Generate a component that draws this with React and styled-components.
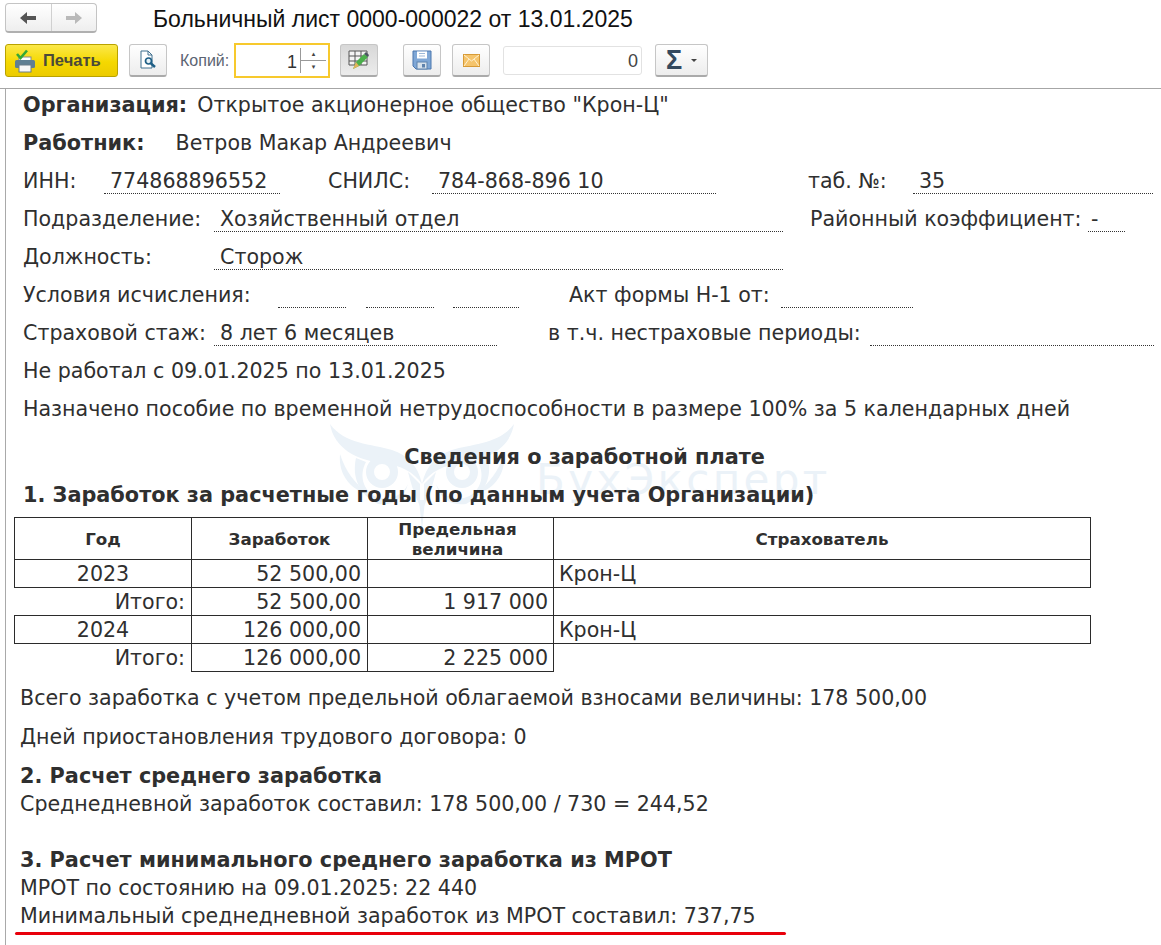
import React from "react";
import styled, { createGlobalStyle } from "styled-components";

const Global = createGlobalStyle`
  html, body { margin: 0; padding: 0; background: #fff; }
  body { width: 1161px; height: 945px; overflow: hidden; font-family: "DejaVu Sans", sans-serif; }
`;

const Page = styled.div`
  width: 1161px;
  height: 945px;
  overflow: hidden;
  display: flex;
  flex-direction: column;
`;

const TitleBar = styled.div`
  height: 41px;
  display: flex;
  align-items: flex-start;
  padding: 3px 0 0 5px;
  box-sizing: border-box;
`;

const NavGroup = styled.div`
  width: 92px;
  height: 30px;
  display: flex;
  box-sizing: border-box;
  border: 1px solid #c4c4c4;
  border-bottom: 2px solid #b0b0b0;
  border-radius: 4px;
  background: linear-gradient(#fff, #eeeeee);
`;

const NavBtn = styled.div`
  flex: 1;
  display: flex;
  align-items: center;
  justify-content: center;
  & + & { border-left: 1px solid #d0d0d0; }
`;

const DocTitle = styled.div`
  margin: 3px 0 0 56px;
  font: 23px "Liberation Sans", sans-serif;
  color: #111;
`;

const Toolbar = styled.div`
  height: 48px;
  display: flex;
  align-items: flex-start;
  padding: 3px 0 0 5px;
  box-sizing: border-box;
  border-bottom: 1px solid #a6a6a6;
`;

const PrintBtn = styled.div`
  width: 113px;
  height: 33px;
  box-sizing: border-box;
  display: flex;
  align-items: center;
  gap: 7px;
  padding-left: 8px;
  border: 1px solid #b9a200;
  border-radius: 3px;
  background: linear-gradient(#fbe84a, #f5d800 55%, #eccb00);
  font: bold 16.5px "Liberation Sans", sans-serif;
  color: #4a4a3a;
`;

const IconBtn = styled.div`
  width: ${({ w }) => w || 38}px;
  height: 33px;
  margin-left: ${({ ml }) => ml || 0}px;
  box-sizing: border-box;
  display: flex;
  align-items: center;
  justify-content: center;
  gap: 9px;
  border: 1px solid #c6c6c6;
  border-bottom: 2px solid #aaa;
  border-radius: 3px;
  background: ${({ active }) => (active ? "linear-gradient(#d8d8d8, #ececec)" : "linear-gradient(#fff, #ededed)")};
`;

const CopiesLabel = styled.div`
  margin: 8px 3px 0 13px;
  width: 51px;
  font: 16px "Liberation Sans", sans-serif;
  color: #5b6472;
`;

const CopiesInput = styled.div`
  width: 96px;
  height: 35px;
  margin-top: -1px;
  box-sizing: border-box;
  display: flex;
  justify-content: flex-end;
  border: 2px solid #f7c92d;
  background: #fff;
  padding: 3px 2px 3px 4px;
`;

const CopiesValue = styled.div`
  font: 18px "Liberation Sans", sans-serif;
  color: #333;
  padding: 4px 3px 0 0;
`;

const Spinner = styled.div`
  width: 25px;
  border-left: 1px solid #999;
  display: flex;
  flex-direction: column;
  font-size: 7px;
  line-height: 12px;
  text-align: center;
  color: #444;
`;

const SpinUp = styled.div`
  flex: 1;
  border-bottom: 1px solid #999;
`;

const SpinDown = styled.div`
  flex: 1;
`;

const SumInput = styled.div`
  width: 139px;
  height: 29px;
  margin: 2px 0 0 13px;
  box-sizing: border-box;
  border: 1px solid #e2e2e2;
  border-radius: 3px;
  text-align: right;
  padding: 4px 3px 0 0;
  font: 18px "Liberation Sans", sans-serif;
  color: #444;
`;

const SigmaGlyph = styled.span`
  font: bold 27px "Liberation Sans", sans-serif;
  color: #34495e;
`;

const Caret = styled.span`
  width: 0;
  height: 0;
  border-left: 3px solid transparent;
  border-right: 3px solid transparent;
  border-top: 3px solid #444;
`;

const Report = styled.div`
  position: relative;
  flex: 1;
  margin-left: 5px;
  padding: 1px 0 0 17px;
  border-left: 1px solid #a9a9a9;
  color: #2f2f2f;
  font-size: 20.6px;
`;

const Watermark = styled.div`
  position: absolute;
  left: 316px;
  top: 333px;
  display: flex;
  align-items: flex-start;
  color: #ebf2f8;
  pointer-events: none;
`;

const WatermarkText = styled.div`
  font: 42px "DejaVu Sans", sans-serif;
  margin: 33px 0 0 14px;
  letter-spacing: 3.4px;
  white-space: nowrap;
`;

const Line = styled.div`
  position: relative;
  height: ${({ h }) => h || 38}px;
  line-height: 30px;
  white-space: nowrap;
  display: flex;
  align-items: flex-start;
  padding-top: ${({ pt }) => pt || 0}px;
  box-sizing: border-box;
`;

const Strong = styled.b`
  font-weight: 700;
  font-size: 20.8px;
  margin-right: ${({ mr }) => mr || 0}px;
`;

const Label = styled.span`
  width: ${({ w }) => (w ? `${w}px` : "auto")};
  margin-left: ${({ ml }) => ml || 0}px;
  flex: none;
`;

const Field = styled.span`
  flex: none;
  box-sizing: border-box;
  width: ${({ w }) => w}px;
  margin-left: ${({ ml }) => ml || 0}px;
  height: 28px;
  padding-left: ${({ pl }) => (pl === undefined ? 6 : pl)}px;
  border-bottom: 1px dotted #333;
`;

const Section = styled.div`
  font-weight: 700;
  font-size: 20.8px;
  height: ${({ h }) => h || 38}px;
  line-height: 30px;
  text-align: ${({ center }) => (center ? "center" : "left")};
  width: ${({ center }) => (center ? "1123px" : "auto")};
  position: relative;
`;

const Table = styled.table`
  position: relative;
  border-collapse: collapse;
  table-layout: fixed;
  width: 1077px;
  margin: 0 0 0 -9px;
  font-size: 20.6px;
`;

const HeadCell = styled.th`
  height: 41px;
  padding: 0 ${({ pr }) => pr || 0}px 0 0;
  border: 1px solid #2b2b2b;
  font-size: 16.7px;
  line-height: 20px;
  font-weight: 700;
  text-align: center;
  color: #2f2f2f;
`;

const Cell = styled.td`
  height: 27px;
  padding: 0 ${({ pr }) => pr || 5}px 0 5px;
  line-height: 24px;
  border: 1px solid #2b2b2b;
  text-align: ${({ align }) => align || "left"};
  white-space: nowrap;
`;

const Total = styled.td`
  padding: 0 6px 0 0;
  text-align: right;
  line-height: 24px;
  border-left: 0;
  border-right: 1px solid #2b2b2b;
`;

const EmptyEnd = styled.td`
  border: 0;
  border-left: 1px solid #2b2b2b;
`;

const Tight = styled.div`
  height: ${({ h }) => h || 28}px;
  line-height: 28px;
  white-space: nowrap;
  font-weight: ${({ bold }) => (bold ? 700 : 400)};
  font-size: ${({ bold }) => (bold ? 20.8 : 20.6)}px;
`;

const Below = styled.div`
  margin-left: -3px;
  position: relative;
`;

const RedLine = styled.div`
  width: 771px;
  height: 3px;
  margin: 2px 0 0 -5px;
  background: #e8000b;
  border-radius: 2px;
`;

const ArrowIcon = ({ dir, color }) => (
  <svg width="18" height="14" viewBox="0 0 18 14">
    <path
      d={dir === "left" ? "M1 7 L8 1 V5 H17 V9 H8 V13 Z" : "M17 7 L10 1 V5 H1 V9 H10 V13 Z"}
      fill={color}
    />
  </svg>
);

const PrinterIcon = () => (
  <svg width="22" height="24" viewBox="0 0 22 24">
    <rect x="5" y="8" width="12" height="6" fill="#fff" stroke="#888" />
    <rect x="1" y="11" width="20" height="8" rx="1.5" fill="#5f7f92" />
    <rect x="5" y="16" width="12" height="7" fill="#f7f7f7" stroke="#6a7c88" />
    <path d="M3 5 L6.5 9 L13 1.5" fill="none" stroke="#35a835" strokeWidth="2.6" />
  </svg>
);

const PreviewIcon = () => (
  <svg width="18" height="20" viewBox="0 0 18 20">
    <path d="M2 1 H9 L13 5 V18 H2 Z" fill="#fff" stroke="#41708f" />
    <path d="M9 1 V5 H13" fill="none" stroke="#41708f" />
    <circle cx="9.5" cy="11" r="3" fill="#e6f2f8" stroke="#1f5f86" strokeWidth="1.7" />
    <path d="M12 13.5 L16 17" stroke="#1f5f86" strokeWidth="2.4" />
  </svg>
);

const TableEditIcon = () => (
  <svg width="22" height="22" viewBox="0 0 22 22">
    <path d="M1 2 H19 V16 H1 Z M1 7 H19 M1 12 H19 M7 2 V16 M13 2 V16" fill="#f4f4f4" stroke="#555" />
    <path d="M5 20 L8 13 L16 5 L20 8 L11 17 Z" fill="#4bb04b" />
    <path d="M16 5 L18 3 L21 6 L20 8 Z" fill="#4a5560" />
    <path d="M5 20 L8 13 L11 17 Z" fill="#e3b35c" />
  </svg>
);

const SaveIcon = () => (
  <svg width="20" height="20" viewBox="0 0 20 20">
    <path d="M1 1 H19 V19 H4 L1 16 Z" fill="#7fa7d6" stroke="#4a76ae" />
    <rect x="5" y="1.5" width="10" height="7" fill="#fff" />
    <path d="M7 3.5 H13 M7 6 H13" stroke="#9db8d8" />
    <rect x="5" y="12" width="10" height="7" fill="#d8e2ec" stroke="#5f83ad" />
    <rect x="10" y="14" width="3" height="3.5" fill="#5f83ad" />
  </svg>
);

const MailIcon = () => (
  <svg width="17" height="13" viewBox="0 0 17 13">
    <rect x="0.5" y="0.5" width="16" height="12" fill="#f5c46c" stroke="#d79a35" />
    <path d="M1 1 L8.5 7 L16 1 M1 12 L6 5 M16 12 L11 5" fill="none" stroke="#fff1cf" />
  </svg>
);

// половина совы, вторая половина зеркалится вокруг x=100
const OwlHalf = () => (
  <g>
    <path d="M8 2 C22 22 50 22 70 28 C86 33 96 44 100 62 C92 50 78 43 60 41 C34 38 12 26 8 2 Z" />
    <path d="M18 32 C24 50 32 60 46 72 C30 68 16 54 18 32 Z" />
    <path d="M34 36 C30 54 36 72 56 82 C72 84 82 76 86 62 C82 72 70 78 58 76 C42 72 36 54 44 40 Z" />
    <path d="M86 50 C90 66 94 76 98 84 L98 62 Z" />
    <circle cx="60" cy="50" r="12" fill="none" stroke="#ebf2f8" strokeWidth="8" />
  </g>
);

const OwlMark = () => (
  <svg width="200" height="110" viewBox="0 0 200 110" fill="#ebf2f8">
    <OwlHalf />
    <g transform="translate(200 0) scale(-1 1)">
      <OwlHalf />
    </g>
    <path d="M97 78 L100 108 L103 78 Z" />
  </svg>
);

const years = [
  { year: "2023", earned: "52 500,00", limit: "1 917 000" },
  { year: "2024", earned: "126 000,00", limit: "2 225 000" },
];

const App = () => (
  <Page>
    <Global />
    <TitleBar>
      <NavGroup>
        <NavBtn><ArrowIcon dir="left" color="#555" /></NavBtn>
        <NavBtn><ArrowIcon dir="right" color="#b9b9b9" /></NavBtn>
      </NavGroup>
      <DocTitle>Больничный лист 0000-000022 от 13.01.2025</DocTitle>
    </TitleBar>
    <Toolbar>
      <PrintBtn><PrinterIcon />Печать</PrintBtn>
      <IconBtn ml={11}><PreviewIcon /></IconBtn>
      <CopiesLabel>Копий:</CopiesLabel>
      <CopiesInput>
        <CopiesValue>1</CopiesValue>
        <Spinner>
          <SpinUp>▴</SpinUp>
          <SpinDown>▾</SpinDown>
        </Spinner>
      </CopiesInput>
      <IconBtn ml={10} active><TableEditIcon /></IconBtn>
      <IconBtn ml={25}><SaveIcon /></IconBtn>
      <IconBtn ml={11}><MailIcon /></IconBtn>
      <SumInput>0</SumInput>
      <IconBtn ml={13} w={53}><SigmaGlyph>Σ</SigmaGlyph><Caret /></IconBtn>
    </Toolbar>
    <Report>
      <Watermark>
        <OwlMark />
        <WatermarkText>БухЭксперт</WatermarkText>
      </Watermark>
      <Line><Strong mr={10}>Организация:</Strong>Открытое акционерное общество "Крон-Ц"</Line>
      <Line><Strong mr={31}>Работник:</Strong>Ветров Макар Андреевич</Line>
      <Line>
        <Label w={81}>ИНН:</Label>
        <Field w={176}>774868896552</Field>
        <Label ml={48} w={104}>СНИЛС:</Label>
        <Field w={284}>784-868-896 10</Field>
        <Label ml={92} w={105}>таб. №:</Label>
        <Field w={240}>35</Field>
      </Line>
      <Line>
        <Label w={191}>Подразделение:</Label>
        <Field w={569}>Хозяйственный отдел</Field>
        <Label ml={27} w={278}>Районный коэффициент:</Label>
        <Field w={37} pl={3}>-</Field>
      </Line>
      <Line>
        <Label w={191}>Должность:</Label>
        <Field w={569}>Сторож</Field>
      </Line>
      <Line>
        <Label w={255}>Условия исчисления:</Label>
        <Field w={68} />
        <Field w={68} ml={20} />
        <Field w={66} ml={19} />
        <Label ml={50} w={212}>Акт формы Н-1 от:</Label>
        <Field w={132} />
      </Line>
      <Line>
        <Label w={191}>Страховой стаж:</Label>
        <Field w={283}>8 лет 6 месяцев</Field>
        <Label ml={51} w={322}>в т.ч. нестраховые периоды:</Label>
        <Field w={284} />
      </Line>
      <Line>Не работал с 09.01.2025 по 13.01.2025</Line>
      <Line h={48}>Назначено пособие по временной нетрудоспособности в размере 100% за 5 календарных дней</Line>
      <Section center>Сведения о заработной плате</Section>
      <Section h={37}>1. Заработок за расчетные годы (по данным учета Организации)</Section>
      <Table>
        <colgroup>
          <col width="177" />
          <col width="176" />
          <col width="186" />
          <col width="537" />
        </colgroup>
        <thead>
          <tr>
            <HeadCell>Год</HeadCell>
            <HeadCell>Заработок</HeadCell>
            <HeadCell pr={6}>Предельная<br />величина</HeadCell>
            <HeadCell>Страхователь</HeadCell>
          </tr>
        </thead>
        <tbody>
          {years.map((y) => (
            <React.Fragment key={y.year}>
              <tr>
                <Cell align="center">{y.year}</Cell>
                <Cell align="right" pr={6}>{y.earned}</Cell>
                <Cell />
                <Cell>Крон-Ц</Cell>
              </tr>
              <tr>
                <Total>Итого:</Total>
                <Cell align="right" pr={6}>{y.earned}</Cell>
                <Cell align="right">{y.limit}</Cell>
                <EmptyEnd />
              </tr>
            </React.Fragment>
          ))}
        </tbody>
      </Table>
      <Below>
        <Line h={40} pt={11}>Всего заработка с учетом предельной облагаемой взносами величины: 178 500,00</Line>
        <Line h={38} pt={10}>Дней приостановления трудового договора: 0</Line>
        <Line h={40} pt={11}><Strong>2. Расчет среднего заработка</Strong></Line>
        <Tight h={56}>Среднедневной заработок составил: 178 500,00 / 730 = 244,52</Tight>
        <Tight bold>3. Расчет минимального среднего заработка из МРОТ</Tight>
        <Tight>МРОТ по состоянию на 09.01.2025: 22 440</Tight>
        <Tight>Минимальный среднедневной заработок из МРОТ составил: 737,75</Tight>
        <RedLine />
      </Below>
    </Report>
  </Page>
);

export default App;
